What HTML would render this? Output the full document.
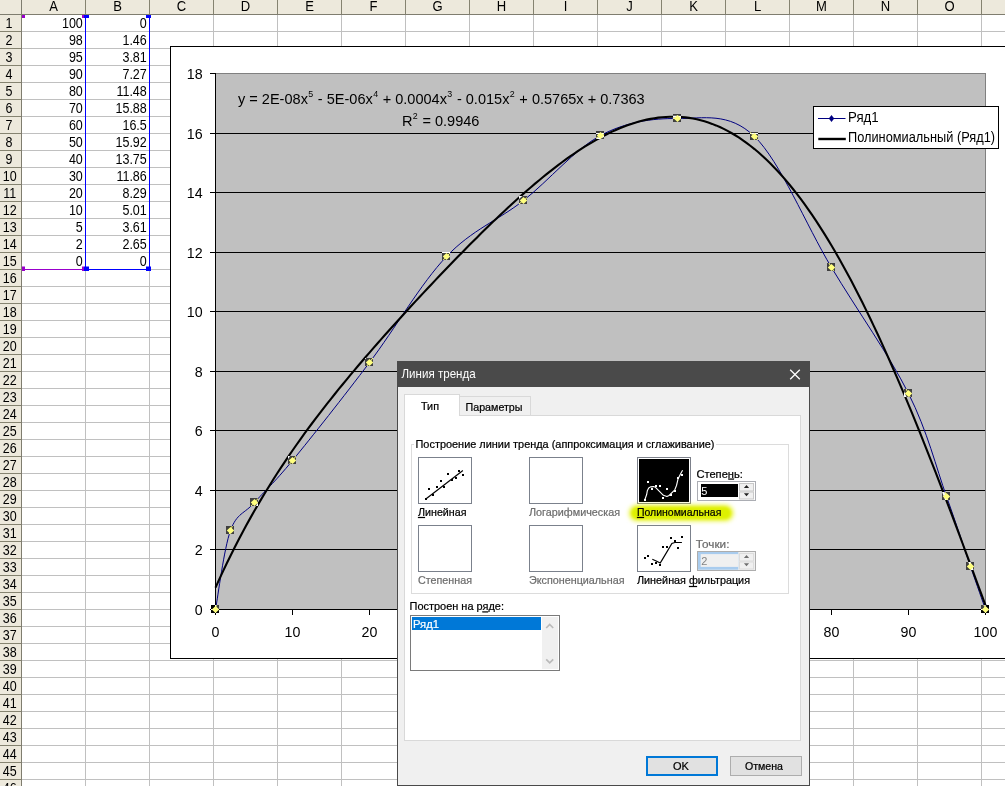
<!DOCTYPE html>
<html><head><meta charset="utf-8"><title>Линия тренда</title>
<style>html,body{margin:0;padding:0;background:#fff;overflow:hidden}body{width:1005px;height:786px;font-family:"Liberation Sans", sans-serif}svg text{white-space:pre}</style>
</head><body>
<svg width="1005" height="786" viewBox="0 0 1005 786" style="display:block"><rect x="0" y="0" width="1005" height="786" fill="#fff"/>
<rect x="0" y="0" width="1005" height="14" fill="#EDE9DC"/>
<rect x="0" y="0" width="21" height="786" fill="#EDE9DC"/>
<rect x="22" y="14" width="983" height="1" fill="#C0C0C0"/><rect x="0" y="14" width="21" height="1" fill="#858370"/><rect x="22" y="31" width="983" height="1" fill="#C0C0C0"/><rect x="0" y="31" width="21" height="1" fill="#858370"/><rect x="22" y="48" width="983" height="1" fill="#C0C0C0"/><rect x="0" y="48" width="21" height="1" fill="#858370"/><rect x="22" y="65" width="983" height="1" fill="#C0C0C0"/><rect x="0" y="65" width="21" height="1" fill="#858370"/><rect x="22" y="82" width="983" height="1" fill="#C0C0C0"/><rect x="0" y="82" width="21" height="1" fill="#858370"/><rect x="22" y="99" width="983" height="1" fill="#C0C0C0"/><rect x="0" y="99" width="21" height="1" fill="#858370"/><rect x="22" y="116" width="983" height="1" fill="#C0C0C0"/><rect x="0" y="116" width="21" height="1" fill="#858370"/><rect x="22" y="133" width="983" height="1" fill="#C0C0C0"/><rect x="0" y="133" width="21" height="1" fill="#858370"/><rect x="22" y="150" width="983" height="1" fill="#C0C0C0"/><rect x="0" y="150" width="21" height="1" fill="#858370"/><rect x="22" y="167" width="983" height="1" fill="#C0C0C0"/><rect x="0" y="167" width="21" height="1" fill="#858370"/><rect x="22" y="184" width="983" height="1" fill="#C0C0C0"/><rect x="0" y="184" width="21" height="1" fill="#858370"/><rect x="22" y="201" width="983" height="1" fill="#C0C0C0"/><rect x="0" y="201" width="21" height="1" fill="#858370"/><rect x="22" y="218" width="983" height="1" fill="#C0C0C0"/><rect x="0" y="218" width="21" height="1" fill="#858370"/><rect x="22" y="235" width="983" height="1" fill="#C0C0C0"/><rect x="0" y="235" width="21" height="1" fill="#858370"/><rect x="22" y="252" width="983" height="1" fill="#C0C0C0"/><rect x="0" y="252" width="21" height="1" fill="#858370"/><rect x="22" y="269" width="983" height="1" fill="#C0C0C0"/><rect x="0" y="269" width="21" height="1" fill="#858370"/><rect x="22" y="286" width="983" height="1" fill="#C0C0C0"/><rect x="0" y="286" width="21" height="1" fill="#858370"/><rect x="22" y="303" width="983" height="1" fill="#C0C0C0"/><rect x="0" y="303" width="21" height="1" fill="#858370"/><rect x="22" y="320" width="983" height="1" fill="#C0C0C0"/><rect x="0" y="320" width="21" height="1" fill="#858370"/><rect x="22" y="337" width="983" height="1" fill="#C0C0C0"/><rect x="0" y="337" width="21" height="1" fill="#858370"/><rect x="22" y="354" width="983" height="1" fill="#C0C0C0"/><rect x="0" y="354" width="21" height="1" fill="#858370"/><rect x="22" y="371" width="983" height="1" fill="#C0C0C0"/><rect x="0" y="371" width="21" height="1" fill="#858370"/><rect x="22" y="388" width="983" height="1" fill="#C0C0C0"/><rect x="0" y="388" width="21" height="1" fill="#858370"/><rect x="22" y="405" width="983" height="1" fill="#C0C0C0"/><rect x="0" y="405" width="21" height="1" fill="#858370"/><rect x="22" y="422" width="983" height="1" fill="#C0C0C0"/><rect x="0" y="422" width="21" height="1" fill="#858370"/><rect x="22" y="439" width="983" height="1" fill="#C0C0C0"/><rect x="0" y="439" width="21" height="1" fill="#858370"/><rect x="22" y="456" width="983" height="1" fill="#C0C0C0"/><rect x="0" y="456" width="21" height="1" fill="#858370"/><rect x="22" y="473" width="983" height="1" fill="#C0C0C0"/><rect x="0" y="473" width="21" height="1" fill="#858370"/><rect x="22" y="490" width="983" height="1" fill="#C0C0C0"/><rect x="0" y="490" width="21" height="1" fill="#858370"/><rect x="22" y="507" width="983" height="1" fill="#C0C0C0"/><rect x="0" y="507" width="21" height="1" fill="#858370"/><rect x="22" y="524" width="983" height="1" fill="#C0C0C0"/><rect x="0" y="524" width="21" height="1" fill="#858370"/><rect x="22" y="541" width="983" height="1" fill="#C0C0C0"/><rect x="0" y="541" width="21" height="1" fill="#858370"/><rect x="22" y="558" width="983" height="1" fill="#C0C0C0"/><rect x="0" y="558" width="21" height="1" fill="#858370"/><rect x="22" y="575" width="983" height="1" fill="#C0C0C0"/><rect x="0" y="575" width="21" height="1" fill="#858370"/><rect x="22" y="592" width="983" height="1" fill="#C0C0C0"/><rect x="0" y="592" width="21" height="1" fill="#858370"/><rect x="22" y="609" width="983" height="1" fill="#C0C0C0"/><rect x="0" y="609" width="21" height="1" fill="#858370"/><rect x="22" y="626" width="983" height="1" fill="#C0C0C0"/><rect x="0" y="626" width="21" height="1" fill="#858370"/><rect x="22" y="643" width="983" height="1" fill="#C0C0C0"/><rect x="0" y="643" width="21" height="1" fill="#858370"/><rect x="22" y="660" width="983" height="1" fill="#C0C0C0"/><rect x="0" y="660" width="21" height="1" fill="#858370"/><rect x="22" y="677" width="983" height="1" fill="#C0C0C0"/><rect x="0" y="677" width="21" height="1" fill="#858370"/><rect x="22" y="694" width="983" height="1" fill="#C0C0C0"/><rect x="0" y="694" width="21" height="1" fill="#858370"/><rect x="22" y="711" width="983" height="1" fill="#C0C0C0"/><rect x="0" y="711" width="21" height="1" fill="#858370"/><rect x="22" y="728" width="983" height="1" fill="#C0C0C0"/><rect x="0" y="728" width="21" height="1" fill="#858370"/><rect x="22" y="745" width="983" height="1" fill="#C0C0C0"/><rect x="0" y="745" width="21" height="1" fill="#858370"/><rect x="22" y="762" width="983" height="1" fill="#C0C0C0"/><rect x="0" y="762" width="21" height="1" fill="#858370"/><rect x="22" y="779" width="983" height="1" fill="#C0C0C0"/><rect x="0" y="779" width="21" height="1" fill="#858370"/><rect x="21" y="15" width="1" height="771" fill="#C0C0C0"/><rect x="21" y="0" width="1" height="14" fill="#858370"/><rect x="85" y="15" width="1" height="771" fill="#C0C0C0"/><rect x="85" y="0" width="1" height="14" fill="#858370"/><rect x="149" y="15" width="1" height="771" fill="#C0C0C0"/><rect x="149" y="0" width="1" height="14" fill="#858370"/><rect x="213" y="15" width="1" height="771" fill="#C0C0C0"/><rect x="213" y="0" width="1" height="14" fill="#858370"/><rect x="277" y="15" width="1" height="771" fill="#C0C0C0"/><rect x="277" y="0" width="1" height="14" fill="#858370"/><rect x="341" y="15" width="1" height="771" fill="#C0C0C0"/><rect x="341" y="0" width="1" height="14" fill="#858370"/><rect x="405" y="15" width="1" height="771" fill="#C0C0C0"/><rect x="405" y="0" width="1" height="14" fill="#858370"/><rect x="469" y="15" width="1" height="771" fill="#C0C0C0"/><rect x="469" y="0" width="1" height="14" fill="#858370"/><rect x="533" y="15" width="1" height="771" fill="#C0C0C0"/><rect x="533" y="0" width="1" height="14" fill="#858370"/><rect x="597" y="15" width="1" height="771" fill="#C0C0C0"/><rect x="597" y="0" width="1" height="14" fill="#858370"/><rect x="661" y="15" width="1" height="771" fill="#C0C0C0"/><rect x="661" y="0" width="1" height="14" fill="#858370"/><rect x="725" y="15" width="1" height="771" fill="#C0C0C0"/><rect x="725" y="0" width="1" height="14" fill="#858370"/><rect x="789" y="15" width="1" height="771" fill="#C0C0C0"/><rect x="789" y="0" width="1" height="14" fill="#858370"/><rect x="853" y="15" width="1" height="771" fill="#C0C0C0"/><rect x="853" y="0" width="1" height="14" fill="#858370"/><rect x="917" y="15" width="1" height="771" fill="#C0C0C0"/><rect x="917" y="0" width="1" height="14" fill="#858370"/><rect x="981" y="15" width="1" height="771" fill="#C0C0C0"/><rect x="981" y="0" width="1" height="14" fill="#858370"/>
<rect x="0" y="14" width="1005" height="1" fill="#7F7D6F"/>
<rect x="21" y="0" width="1" height="786" fill="#7F7D6F"/>
<text transform="translate(53.5,11.2) scale(0.9,1)" font-family='"Liberation Sans", sans-serif' font-size="14.5" fill="#000" text-anchor="middle" >A</text>
<text transform="translate(117.5,11.2) scale(0.9,1)" font-family='"Liberation Sans", sans-serif' font-size="14.5" fill="#000" text-anchor="middle" >B</text>
<text transform="translate(181.5,11.2) scale(0.9,1)" font-family='"Liberation Sans", sans-serif' font-size="14.5" fill="#000" text-anchor="middle" >C</text>
<text transform="translate(245.5,11.2) scale(0.9,1)" font-family='"Liberation Sans", sans-serif' font-size="14.5" fill="#000" text-anchor="middle" >D</text>
<text transform="translate(309.5,11.2) scale(0.9,1)" font-family='"Liberation Sans", sans-serif' font-size="14.5" fill="#000" text-anchor="middle" >E</text>
<text transform="translate(373.5,11.2) scale(0.9,1)" font-family='"Liberation Sans", sans-serif' font-size="14.5" fill="#000" text-anchor="middle" >F</text>
<text transform="translate(437.5,11.2) scale(0.9,1)" font-family='"Liberation Sans", sans-serif' font-size="14.5" fill="#000" text-anchor="middle" >G</text>
<text transform="translate(501.5,11.2) scale(0.9,1)" font-family='"Liberation Sans", sans-serif' font-size="14.5" fill="#000" text-anchor="middle" >H</text>
<text transform="translate(565.5,11.2) scale(0.9,1)" font-family='"Liberation Sans", sans-serif' font-size="14.5" fill="#000" text-anchor="middle" >I</text>
<text transform="translate(629.5,11.2) scale(0.9,1)" font-family='"Liberation Sans", sans-serif' font-size="14.5" fill="#000" text-anchor="middle" >J</text>
<text transform="translate(693.5,11.2) scale(0.9,1)" font-family='"Liberation Sans", sans-serif' font-size="14.5" fill="#000" text-anchor="middle" >K</text>
<text transform="translate(757.5,11.2) scale(0.9,1)" font-family='"Liberation Sans", sans-serif' font-size="14.5" fill="#000" text-anchor="middle" >L</text>
<text transform="translate(821.5,11.2) scale(0.9,1)" font-family='"Liberation Sans", sans-serif' font-size="14.5" fill="#000" text-anchor="middle" >M</text>
<text transform="translate(885.5,11.2) scale(0.9,1)" font-family='"Liberation Sans", sans-serif' font-size="14.5" fill="#000" text-anchor="middle" >N</text>
<text transform="translate(949.5,11.2) scale(0.9,1)" font-family='"Liberation Sans", sans-serif' font-size="14.5" fill="#000" text-anchor="middle" >O</text>
<text transform="translate(8.9,28) scale(0.87,1)" font-family='"Liberation Sans", sans-serif' font-size="14.4" fill="#000" text-anchor="middle" >1</text>
<text transform="translate(8.9,45) scale(0.87,1)" font-family='"Liberation Sans", sans-serif' font-size="14.4" fill="#000" text-anchor="middle" >2</text>
<text transform="translate(8.9,62) scale(0.87,1)" font-family='"Liberation Sans", sans-serif' font-size="14.4" fill="#000" text-anchor="middle" >3</text>
<text transform="translate(8.9,79) scale(0.87,1)" font-family='"Liberation Sans", sans-serif' font-size="14.4" fill="#000" text-anchor="middle" >4</text>
<text transform="translate(8.9,96) scale(0.87,1)" font-family='"Liberation Sans", sans-serif' font-size="14.4" fill="#000" text-anchor="middle" >5</text>
<text transform="translate(8.9,113) scale(0.87,1)" font-family='"Liberation Sans", sans-serif' font-size="14.4" fill="#000" text-anchor="middle" >6</text>
<text transform="translate(8.9,130) scale(0.87,1)" font-family='"Liberation Sans", sans-serif' font-size="14.4" fill="#000" text-anchor="middle" >7</text>
<text transform="translate(8.9,147) scale(0.87,1)" font-family='"Liberation Sans", sans-serif' font-size="14.4" fill="#000" text-anchor="middle" >8</text>
<text transform="translate(8.9,164) scale(0.87,1)" font-family='"Liberation Sans", sans-serif' font-size="14.4" fill="#000" text-anchor="middle" >9</text>
<text transform="translate(9.8,181) scale(0.87,1)" font-family='"Liberation Sans", sans-serif' font-size="14.4" fill="#000" text-anchor="middle" >10</text>
<text transform="translate(9.8,198) scale(0.87,1)" font-family='"Liberation Sans", sans-serif' font-size="14.4" fill="#000" text-anchor="middle" >11</text>
<text transform="translate(9.8,215) scale(0.87,1)" font-family='"Liberation Sans", sans-serif' font-size="14.4" fill="#000" text-anchor="middle" >12</text>
<text transform="translate(9.8,232) scale(0.87,1)" font-family='"Liberation Sans", sans-serif' font-size="14.4" fill="#000" text-anchor="middle" >13</text>
<text transform="translate(9.8,249) scale(0.87,1)" font-family='"Liberation Sans", sans-serif' font-size="14.4" fill="#000" text-anchor="middle" >14</text>
<text transform="translate(9.8,266) scale(0.87,1)" font-family='"Liberation Sans", sans-serif' font-size="14.4" fill="#000" text-anchor="middle" >15</text>
<text transform="translate(9.8,283) scale(0.87,1)" font-family='"Liberation Sans", sans-serif' font-size="14.4" fill="#000" text-anchor="middle" >16</text>
<text transform="translate(9.8,300) scale(0.87,1)" font-family='"Liberation Sans", sans-serif' font-size="14.4" fill="#000" text-anchor="middle" >17</text>
<text transform="translate(9.8,317) scale(0.87,1)" font-family='"Liberation Sans", sans-serif' font-size="14.4" fill="#000" text-anchor="middle" >18</text>
<text transform="translate(9.8,334) scale(0.87,1)" font-family='"Liberation Sans", sans-serif' font-size="14.4" fill="#000" text-anchor="middle" >19</text>
<text transform="translate(9.8,351) scale(0.87,1)" font-family='"Liberation Sans", sans-serif' font-size="14.4" fill="#000" text-anchor="middle" >20</text>
<text transform="translate(9.8,368) scale(0.87,1)" font-family='"Liberation Sans", sans-serif' font-size="14.4" fill="#000" text-anchor="middle" >21</text>
<text transform="translate(9.8,385) scale(0.87,1)" font-family='"Liberation Sans", sans-serif' font-size="14.4" fill="#000" text-anchor="middle" >22</text>
<text transform="translate(9.8,402) scale(0.87,1)" font-family='"Liberation Sans", sans-serif' font-size="14.4" fill="#000" text-anchor="middle" >23</text>
<text transform="translate(9.8,419) scale(0.87,1)" font-family='"Liberation Sans", sans-serif' font-size="14.4" fill="#000" text-anchor="middle" >24</text>
<text transform="translate(9.8,436) scale(0.87,1)" font-family='"Liberation Sans", sans-serif' font-size="14.4" fill="#000" text-anchor="middle" >25</text>
<text transform="translate(9.8,453) scale(0.87,1)" font-family='"Liberation Sans", sans-serif' font-size="14.4" fill="#000" text-anchor="middle" >26</text>
<text transform="translate(9.8,470) scale(0.87,1)" font-family='"Liberation Sans", sans-serif' font-size="14.4" fill="#000" text-anchor="middle" >27</text>
<text transform="translate(9.8,487) scale(0.87,1)" font-family='"Liberation Sans", sans-serif' font-size="14.4" fill="#000" text-anchor="middle" >28</text>
<text transform="translate(9.8,504) scale(0.87,1)" font-family='"Liberation Sans", sans-serif' font-size="14.4" fill="#000" text-anchor="middle" >29</text>
<text transform="translate(9.8,521) scale(0.87,1)" font-family='"Liberation Sans", sans-serif' font-size="14.4" fill="#000" text-anchor="middle" >30</text>
<text transform="translate(9.8,538) scale(0.87,1)" font-family='"Liberation Sans", sans-serif' font-size="14.4" fill="#000" text-anchor="middle" >31</text>
<text transform="translate(9.8,555) scale(0.87,1)" font-family='"Liberation Sans", sans-serif' font-size="14.4" fill="#000" text-anchor="middle" >32</text>
<text transform="translate(9.8,572) scale(0.87,1)" font-family='"Liberation Sans", sans-serif' font-size="14.4" fill="#000" text-anchor="middle" >33</text>
<text transform="translate(9.8,589) scale(0.87,1)" font-family='"Liberation Sans", sans-serif' font-size="14.4" fill="#000" text-anchor="middle" >34</text>
<text transform="translate(9.8,606) scale(0.87,1)" font-family='"Liberation Sans", sans-serif' font-size="14.4" fill="#000" text-anchor="middle" >35</text>
<text transform="translate(9.8,623) scale(0.87,1)" font-family='"Liberation Sans", sans-serif' font-size="14.4" fill="#000" text-anchor="middle" >36</text>
<text transform="translate(9.8,640) scale(0.87,1)" font-family='"Liberation Sans", sans-serif' font-size="14.4" fill="#000" text-anchor="middle" >37</text>
<text transform="translate(9.8,657) scale(0.87,1)" font-family='"Liberation Sans", sans-serif' font-size="14.4" fill="#000" text-anchor="middle" >38</text>
<text transform="translate(9.8,674) scale(0.87,1)" font-family='"Liberation Sans", sans-serif' font-size="14.4" fill="#000" text-anchor="middle" >39</text>
<text transform="translate(9.8,691) scale(0.87,1)" font-family='"Liberation Sans", sans-serif' font-size="14.4" fill="#000" text-anchor="middle" >40</text>
<text transform="translate(9.8,708) scale(0.87,1)" font-family='"Liberation Sans", sans-serif' font-size="14.4" fill="#000" text-anchor="middle" >41</text>
<text transform="translate(9.8,725) scale(0.87,1)" font-family='"Liberation Sans", sans-serif' font-size="14.4" fill="#000" text-anchor="middle" >42</text>
<text transform="translate(9.8,742) scale(0.87,1)" font-family='"Liberation Sans", sans-serif' font-size="14.4" fill="#000" text-anchor="middle" >43</text>
<text transform="translate(9.8,759) scale(0.87,1)" font-family='"Liberation Sans", sans-serif' font-size="14.4" fill="#000" text-anchor="middle" >44</text>
<text transform="translate(9.8,776) scale(0.87,1)" font-family='"Liberation Sans", sans-serif' font-size="14.4" fill="#000" text-anchor="middle" >45</text>
<text transform="translate(9.8,793) scale(0.87,1)" font-family='"Liberation Sans", sans-serif' font-size="14.4" fill="#000" text-anchor="middle" >46</text>
<text transform="translate(82.8,28) scale(0.87,1)" font-family='"Liberation Sans", sans-serif' font-size="14.4" fill="#000" text-anchor="end" >100</text>
<text transform="translate(146.8,28) scale(0.87,1)" font-family='"Liberation Sans", sans-serif' font-size="14.4" fill="#000" text-anchor="end" >0</text>
<text transform="translate(82.8,45) scale(0.87,1)" font-family='"Liberation Sans", sans-serif' font-size="14.4" fill="#000" text-anchor="end" >98</text>
<text transform="translate(146.8,45) scale(0.87,1)" font-family='"Liberation Sans", sans-serif' font-size="14.4" fill="#000" text-anchor="end" >1.46</text>
<text transform="translate(82.8,62) scale(0.87,1)" font-family='"Liberation Sans", sans-serif' font-size="14.4" fill="#000" text-anchor="end" >95</text>
<text transform="translate(146.8,62) scale(0.87,1)" font-family='"Liberation Sans", sans-serif' font-size="14.4" fill="#000" text-anchor="end" >3.81</text>
<text transform="translate(82.8,79) scale(0.87,1)" font-family='"Liberation Sans", sans-serif' font-size="14.4" fill="#000" text-anchor="end" >90</text>
<text transform="translate(146.8,79) scale(0.87,1)" font-family='"Liberation Sans", sans-serif' font-size="14.4" fill="#000" text-anchor="end" >7.27</text>
<text transform="translate(82.8,96) scale(0.87,1)" font-family='"Liberation Sans", sans-serif' font-size="14.4" fill="#000" text-anchor="end" >80</text>
<text transform="translate(146.8,96) scale(0.87,1)" font-family='"Liberation Sans", sans-serif' font-size="14.4" fill="#000" text-anchor="end" >11.48</text>
<text transform="translate(82.8,113) scale(0.87,1)" font-family='"Liberation Sans", sans-serif' font-size="14.4" fill="#000" text-anchor="end" >70</text>
<text transform="translate(146.8,113) scale(0.87,1)" font-family='"Liberation Sans", sans-serif' font-size="14.4" fill="#000" text-anchor="end" >15.88</text>
<text transform="translate(82.8,130) scale(0.87,1)" font-family='"Liberation Sans", sans-serif' font-size="14.4" fill="#000" text-anchor="end" >60</text>
<text transform="translate(146.8,130) scale(0.87,1)" font-family='"Liberation Sans", sans-serif' font-size="14.4" fill="#000" text-anchor="end" >16.5</text>
<text transform="translate(82.8,147) scale(0.87,1)" font-family='"Liberation Sans", sans-serif' font-size="14.4" fill="#000" text-anchor="end" >50</text>
<text transform="translate(146.8,147) scale(0.87,1)" font-family='"Liberation Sans", sans-serif' font-size="14.4" fill="#000" text-anchor="end" >15.92</text>
<text transform="translate(82.8,164) scale(0.87,1)" font-family='"Liberation Sans", sans-serif' font-size="14.4" fill="#000" text-anchor="end" >40</text>
<text transform="translate(146.8,164) scale(0.87,1)" font-family='"Liberation Sans", sans-serif' font-size="14.4" fill="#000" text-anchor="end" >13.75</text>
<text transform="translate(82.8,181) scale(0.87,1)" font-family='"Liberation Sans", sans-serif' font-size="14.4" fill="#000" text-anchor="end" >30</text>
<text transform="translate(146.8,181) scale(0.87,1)" font-family='"Liberation Sans", sans-serif' font-size="14.4" fill="#000" text-anchor="end" >11.86</text>
<text transform="translate(82.8,198) scale(0.87,1)" font-family='"Liberation Sans", sans-serif' font-size="14.4" fill="#000" text-anchor="end" >20</text>
<text transform="translate(146.8,198) scale(0.87,1)" font-family='"Liberation Sans", sans-serif' font-size="14.4" fill="#000" text-anchor="end" >8.29</text>
<text transform="translate(82.8,215) scale(0.87,1)" font-family='"Liberation Sans", sans-serif' font-size="14.4" fill="#000" text-anchor="end" >10</text>
<text transform="translate(146.8,215) scale(0.87,1)" font-family='"Liberation Sans", sans-serif' font-size="14.4" fill="#000" text-anchor="end" >5.01</text>
<text transform="translate(82.8,232) scale(0.87,1)" font-family='"Liberation Sans", sans-serif' font-size="14.4" fill="#000" text-anchor="end" >5</text>
<text transform="translate(146.8,232) scale(0.87,1)" font-family='"Liberation Sans", sans-serif' font-size="14.4" fill="#000" text-anchor="end" >3.61</text>
<text transform="translate(82.8,249) scale(0.87,1)" font-family='"Liberation Sans", sans-serif' font-size="14.4" fill="#000" text-anchor="end" >2</text>
<text transform="translate(146.8,249) scale(0.87,1)" font-family='"Liberation Sans", sans-serif' font-size="14.4" fill="#000" text-anchor="end" >2.65</text>
<text transform="translate(82.8,266) scale(0.87,1)" font-family='"Liberation Sans", sans-serif' font-size="14.4" fill="#000" text-anchor="end" >0</text>
<text transform="translate(146.8,266) scale(0.87,1)" font-family='"Liberation Sans", sans-serif' font-size="14.4" fill="#000" text-anchor="end" >0</text>
<rect x="85" y="15" width="1" height="255" fill="#0000FF"/>
<rect x="149" y="15" width="1" height="255" fill="#0000FF"/>
<rect x="85" y="269" width="65" height="1" fill="#0000FF"/>
<rect x="22" y="269" width="63" height="1" fill="#9900CC"/>
<rect x="22" y="15" width="3" height="3" fill="#9900CC"/>
<rect x="82" y="15" width="2" height="3" fill="#9900CC"/>
<rect x="84" y="15" width="5" height="3" fill="#0000FF"/>
<rect x="146" y="15" width="5" height="3" fill="#0000FF"/>
<rect x="22" y="266.5" width="3" height="4.5" fill="#9900CC"/>
<rect x="82" y="266.5" width="2" height="4.5" fill="#9900CC"/>
<rect x="84" y="266.5" width="5" height="4.5" fill="#0000FF"/>
<rect x="146" y="266.5" width="5" height="4.5" fill="#0000FF"/>
<rect x="170.5" y="46.5" width="900" height="612" fill="#fff" stroke="#000" stroke-width="1"/>
<rect x="215.5" y="73.5" width="770" height="536" fill="#C0C0C0" stroke="#808080" stroke-width="1"/>
<rect x="215" y="549" width="770" height="1" fill="#000"/>
<rect x="215" y="490" width="770" height="1" fill="#000"/>
<rect x="215" y="430" width="770" height="1" fill="#000"/>
<rect x="215" y="371" width="770" height="1" fill="#000"/>
<rect x="215" y="311" width="770" height="1" fill="#000"/>
<rect x="215" y="252" width="770" height="1" fill="#000"/>
<rect x="215" y="192" width="770" height="1" fill="#000"/>
<rect x="215" y="133" width="770" height="1" fill="#000"/>
<rect x="215" y="73" width="1" height="537" fill="#000"/>
<rect x="215" y="609" width="771" height="1" fill="#000"/>
<rect x="210" y="609" width="5" height="1" fill="#000"/>
<rect x="210" y="549" width="5" height="1" fill="#000"/>
<rect x="210" y="490" width="5" height="1" fill="#000"/>
<rect x="210" y="430" width="5" height="1" fill="#000"/>
<rect x="210" y="371" width="5" height="1" fill="#000"/>
<rect x="210" y="311" width="5" height="1" fill="#000"/>
<rect x="210" y="252" width="5" height="1" fill="#000"/>
<rect x="210" y="192" width="5" height="1" fill="#000"/>
<rect x="210" y="133" width="5" height="1" fill="#000"/>
<rect x="210" y="73" width="5" height="1" fill="#000"/>
<rect x="215" y="609" width="1" height="6" fill="#000"/>
<rect x="292" y="609" width="1" height="6" fill="#000"/>
<rect x="369" y="609" width="1" height="6" fill="#000"/>
<rect x="446" y="609" width="1" height="6" fill="#000"/>
<rect x="523" y="609" width="1" height="6" fill="#000"/>
<rect x="600" y="609" width="1" height="6" fill="#000"/>
<rect x="677" y="609" width="1" height="6" fill="#000"/>
<rect x="754" y="609" width="1" height="6" fill="#000"/>
<rect x="831" y="609" width="1" height="6" fill="#000"/>
<rect x="908" y="609" width="1" height="6" fill="#000"/>
<rect x="985" y="609" width="1" height="6" fill="#000"/>
<text transform="translate(202.6,615.0) scale(0.925,1)" font-family='"Liberation Sans", sans-serif' font-size="15.4" fill="#000" text-anchor="end" >0</text>
<text transform="translate(202.6,555.0) scale(0.925,1)" font-family='"Liberation Sans", sans-serif' font-size="15.4" fill="#000" text-anchor="end" >2</text>
<text transform="translate(202.6,496.0) scale(0.925,1)" font-family='"Liberation Sans", sans-serif' font-size="15.4" fill="#000" text-anchor="end" >4</text>
<text transform="translate(202.6,436.0) scale(0.925,1)" font-family='"Liberation Sans", sans-serif' font-size="15.4" fill="#000" text-anchor="end" >6</text>
<text transform="translate(202.6,377.0) scale(0.925,1)" font-family='"Liberation Sans", sans-serif' font-size="15.4" fill="#000" text-anchor="end" >8</text>
<text transform="translate(202.6,317.0) scale(0.925,1)" font-family='"Liberation Sans", sans-serif' font-size="15.4" fill="#000" text-anchor="end" >10</text>
<text transform="translate(202.6,258.0) scale(0.925,1)" font-family='"Liberation Sans", sans-serif' font-size="15.4" fill="#000" text-anchor="end" >12</text>
<text transform="translate(202.6,198.0) scale(0.925,1)" font-family='"Liberation Sans", sans-serif' font-size="15.4" fill="#000" text-anchor="end" >14</text>
<text transform="translate(202.6,139.0) scale(0.925,1)" font-family='"Liberation Sans", sans-serif' font-size="15.4" fill="#000" text-anchor="end" >16</text>
<text transform="translate(202.6,79.0) scale(0.925,1)" font-family='"Liberation Sans", sans-serif' font-size="15.4" fill="#000" text-anchor="end" >18</text>
<text transform="translate(215.5,637.2) scale(0.925,1)" font-family='"Liberation Sans", sans-serif' font-size="15.4" fill="#000" text-anchor="middle" >0</text>
<text transform="translate(292.5,637.2) scale(0.925,1)" font-family='"Liberation Sans", sans-serif' font-size="15.4" fill="#000" text-anchor="middle" >10</text>
<text transform="translate(369.5,637.2) scale(0.925,1)" font-family='"Liberation Sans", sans-serif' font-size="15.4" fill="#000" text-anchor="middle" >20</text>
<text transform="translate(446.5,637.2) scale(0.925,1)" font-family='"Liberation Sans", sans-serif' font-size="15.4" fill="#000" text-anchor="middle" >30</text>
<text transform="translate(523.5,637.2) scale(0.925,1)" font-family='"Liberation Sans", sans-serif' font-size="15.4" fill="#000" text-anchor="middle" >40</text>
<text transform="translate(600.5,637.2) scale(0.925,1)" font-family='"Liberation Sans", sans-serif' font-size="15.4" fill="#000" text-anchor="middle" >50</text>
<text transform="translate(677.5,637.2) scale(0.925,1)" font-family='"Liberation Sans", sans-serif' font-size="15.4" fill="#000" text-anchor="middle" >60</text>
<text transform="translate(754.5,637.2) scale(0.925,1)" font-family='"Liberation Sans", sans-serif' font-size="15.4" fill="#000" text-anchor="middle" >70</text>
<text transform="translate(831.5,637.2) scale(0.925,1)" font-family='"Liberation Sans", sans-serif' font-size="15.4" fill="#000" text-anchor="middle" >80</text>
<text transform="translate(908.5,637.2) scale(0.925,1)" font-family='"Liberation Sans", sans-serif' font-size="15.4" fill="#000" text-anchor="middle" >90</text>
<text transform="translate(985.5,637.2) scale(0.925,1)" font-family='"Liberation Sans", sans-serif' font-size="15.4" fill="#000" text-anchor="middle" >100</text>
<path d="M985.50,609.50 C983.00,602.33 977.00,585.33 970.50,566.50 C964.00,547.67 956.83,525.33 946.50,496.50 C936.17,467.67 927.67,431.67 908.50,393.50 C889.33,355.33 857.17,310.33 831.50,267.50 C805.83,224.67 780.17,161.33 754.50,136.50 C728.83,111.67 703.17,118.67 677.50,118.50 C651.83,118.33 626.17,121.83 600.50,135.50 C574.83,149.17 549.17,180.33 523.50,200.50 C497.83,220.67 472.17,229.50 446.50,256.50 C420.83,283.50 395.17,328.50 369.50,362.50 C343.83,396.50 311.67,437.17 292.50,460.50 C273.33,483.83 264.83,490.83 254.50,502.50 C244.17,514.17 237.00,512.67 230.50,530.50 C224.00,548.33 218.00,596.33 215.50,609.50" fill="none" stroke="#000080" stroke-width="1"/>
<path d="M215.50,587.58 L219.35,579.10 L223.20,570.84 L227.05,562.79 L230.90,554.94 L234.75,547.27 L238.60,539.79 L242.45,532.49 L246.30,525.35 L250.15,518.38 L254.00,511.56 L257.85,504.88 L261.70,498.35 L265.55,491.96 L269.40,485.69 L273.25,479.55 L277.10,473.52 L280.95,467.61 L284.80,461.80 L288.65,456.10 L292.50,450.49 L296.35,444.98 L300.20,439.55 L304.05,434.21 L307.90,428.94 L311.75,423.75 L315.60,418.63 L319.45,413.58 L323.30,408.59 L327.15,403.66 L331.00,398.79 L334.85,393.98 L338.70,389.21 L342.55,384.49 L346.40,379.82 L350.25,375.18 L354.10,370.59 L357.95,366.04 L361.80,361.52 L365.65,357.04 L369.50,352.59 L373.35,348.17 L377.20,343.77 L381.05,339.41 L384.90,335.07 L388.75,330.75 L392.60,326.46 L396.45,322.19 L400.30,317.94 L404.15,313.72 L408.00,309.51 L411.85,305.32 L415.70,301.16 L419.55,297.01 L423.40,292.88 L427.25,288.77 L431.10,284.68 L434.95,280.60 L438.80,276.55 L442.65,272.51 L446.50,268.50 L450.35,264.50 L454.20,260.53 L458.05,256.58 L461.90,252.65 L465.75,248.74 L469.60,244.85 L473.45,240.99 L477.30,237.16 L481.15,233.35 L485.00,229.57 L488.85,225.82 L492.70,222.11 L496.55,218.42 L500.40,214.77 L504.25,211.15 L508.10,207.57 L511.95,204.02 L515.80,200.52 L519.65,197.06 L523.50,193.64 L527.35,190.27 L531.20,186.94 L535.05,183.66 L538.90,180.44 L542.75,177.26 L546.60,174.14 L550.45,171.08 L554.30,168.08 L558.15,165.14 L562.00,162.26 L565.85,159.45 L569.70,156.71 L573.55,154.04 L577.40,151.43 L581.25,148.91 L585.10,146.46 L588.95,144.09 L592.80,141.80 L596.65,139.60 L600.50,137.48 L604.35,135.45 L608.20,133.51 L612.05,131.66 L615.90,129.92 L619.75,128.26 L623.60,126.71 L627.45,125.26 L631.30,123.92 L635.15,122.68 L639.00,121.56 L642.85,120.54 L646.70,119.64 L650.55,118.86 L654.40,118.19 L658.25,117.65 L662.10,117.23 L665.95,116.93 L669.80,116.77 L673.65,116.73 L677.50,116.82 L681.35,117.05 L685.20,117.41 L689.05,117.91 L692.90,118.54 L696.75,119.32 L700.60,120.25 L704.45,121.31 L708.30,122.53 L712.15,123.89 L716.00,125.40 L719.85,127.07 L723.70,128.88 L727.55,130.85 L731.40,132.98 L735.25,135.26 L739.10,137.70 L742.95,140.30 L746.80,143.07 L750.65,145.99 L754.50,149.07 L758.35,152.32 L762.20,155.73 L766.05,159.31 L769.90,163.05 L773.75,166.96 L777.60,171.03 L781.45,175.27 L785.30,179.68 L789.15,184.25 L793.00,188.99 L796.85,193.90 L800.70,198.98 L804.55,204.22 L808.40,209.63 L812.25,215.20 L816.10,220.94 L819.95,226.84 L823.80,232.91 L827.65,239.14 L831.50,245.53 L835.35,252.08 L839.20,258.80 L843.05,265.67 L846.90,272.69 L850.75,279.87 L854.60,287.21 L858.45,294.70 L862.30,302.33 L866.15,310.11 L870.00,318.04 L873.85,326.11 L877.70,334.32 L881.55,342.66 L885.40,351.14 L889.25,359.75 L893.10,368.49 L896.95,377.35 L900.80,386.34 L904.65,395.44 L908.50,404.65 L912.35,413.97 L916.20,423.40 L920.05,432.93 L923.90,442.55 L927.75,452.27 L931.60,462.08 L935.45,471.96 L939.30,481.92 L943.15,491.96 L947.00,502.06 L950.85,512.22 L954.70,522.43 L958.55,532.69 L962.40,543.00 L966.25,553.33 L970.10,563.70 L973.95,574.09 L977.80,584.49 L981.65,594.91 L985.50,605.32" fill="none" stroke="#000" stroke-width="2.1" stroke-linejoin="round"/>
<path d="M985.5,605.9 l3.7,3.6 l-3.7,3.6 l-3.7,-3.6 z" fill="#000080"/>
<path d="M970.5,562.9 l3.7,3.6 l-3.7,3.6 l-3.7,-3.6 z" fill="#000080"/>
<path d="M946.5,492.9 l3.7,3.6 l-3.7,3.6 l-3.7,-3.6 z" fill="#000080"/>
<path d="M908.5,389.9 l3.7,3.6 l-3.7,3.6 l-3.7,-3.6 z" fill="#000080"/>
<path d="M831.5,263.9 l3.7,3.6 l-3.7,3.6 l-3.7,-3.6 z" fill="#000080"/>
<path d="M754.5,132.9 l3.7,3.6 l-3.7,3.6 l-3.7,-3.6 z" fill="#000080"/>
<path d="M677.5,114.9 l3.7,3.6 l-3.7,3.6 l-3.7,-3.6 z" fill="#000080"/>
<path d="M600.5,131.9 l3.7,3.6 l-3.7,3.6 l-3.7,-3.6 z" fill="#000080"/>
<path d="M523.5,196.9 l3.7,3.6 l-3.7,3.6 l-3.7,-3.6 z" fill="#000080"/>
<path d="M446.5,252.9 l3.7,3.6 l-3.7,3.6 l-3.7,-3.6 z" fill="#000080"/>
<path d="M369.5,358.9 l3.7,3.6 l-3.7,3.6 l-3.7,-3.6 z" fill="#000080"/>
<path d="M292.5,456.9 l3.7,3.6 l-3.7,3.6 l-3.7,-3.6 z" fill="#000080"/>
<path d="M254.5,498.9 l3.7,3.6 l-3.7,3.6 l-3.7,-3.6 z" fill="#000080"/>
<path d="M230.5,526.9 l3.7,3.6 l-3.7,3.6 l-3.7,-3.6 z" fill="#000080"/>
<path d="M215.5,605.9 l3.7,3.6 l-3.7,3.6 l-3.7,-3.6 z" fill="#000080"/>
<g style="mix-blend-mode:difference" shape-rendering="crispEdges">
<rect x="981.0" y="605.0" width="8" height="8" fill="#fff"/>
<rect x="966.0" y="562.0" width="8" height="8" fill="#fff"/>
<rect x="942.0" y="492.0" width="8" height="8" fill="#fff"/>
<rect x="904.0" y="389.0" width="8" height="8" fill="#fff"/>
<rect x="827.0" y="263.0" width="8" height="8" fill="#fff"/>
<rect x="750.0" y="132.0" width="8" height="8" fill="#fff"/>
<rect x="673.0" y="114.0" width="8" height="8" fill="#fff"/>
<rect x="596.0" y="131.0" width="8" height="8" fill="#fff"/>
<rect x="519.0" y="196.0" width="8" height="8" fill="#fff"/>
<rect x="442.0" y="252.0" width="8" height="8" fill="#fff"/>
<rect x="365.0" y="358.0" width="8" height="8" fill="#fff"/>
<rect x="288.0" y="456.0" width="8" height="8" fill="#fff"/>
<rect x="250.0" y="498.0" width="8" height="8" fill="#fff"/>
<rect x="226.0" y="526.0" width="8" height="8" fill="#fff"/>
<rect x="211.0" y="605.0" width="8" height="8" fill="#fff"/>
</g>
<text transform="translate(238,104) scale(0.945,1)" font-family='"Liberation Sans", sans-serif' font-size="15.4" fill="#000" text-anchor="start" >y = 2E-08x<tspan dy="-7" font-size="9.4" dx="0.4">5</tspan><tspan dy="7" dx="0.6"> - 5E-06x</tspan><tspan dy="-7" font-size="9.4" dx="0.4">4</tspan><tspan dy="7" dx="0.6"> + 0.0004x</tspan><tspan dy="-7" font-size="9.4" dx="0.4">3</tspan><tspan dy="7" dx="0.6"> - 0.015x</tspan><tspan dy="-7" font-size="9.4" dx="0.4">2</tspan><tspan dy="7" dx="0.6"> + 0.5765x + 0.7363</tspan></text>
<text transform="translate(402,126) scale(0.945,1)" font-family='"Liberation Sans", sans-serif' font-size="15.4" fill="#000" text-anchor="start" >R<tspan dy="-7" font-size="9.4" dx="0.4">2</tspan><tspan dy="7" dx="0.6"> = 0.9946</tspan></text>
<rect x="813.5" y="106.5" width="185" height="42" fill="#fff" stroke="#000" stroke-width="1"/>
<rect x="818" y="118" width="27.5" height="1" fill="#000080"/>
<path d="M831.5,115 l2.7,3.5 l-2.7,3.5 l-2.7,-3.5 z" fill="#000080"/>
<rect x="818.3" y="137.8" width="27.5" height="2.4" fill="#000"/>
<text transform="translate(848,122.2) scale(0.907,1)" font-family='"Liberation Sans", sans-serif' font-size="14.6" fill="#000" text-anchor="start" >Ряд1</text>
<text transform="translate(848,142.2) scale(0.876,1)" font-family='"Liberation Sans", sans-serif' font-size="14.6" fill="#000" text-anchor="start" >Полиномиальный (Ряд1)</text>
<rect x="397" y="361" width="413" height="425" fill="#4A4A4A"/>
<rect x="398" y="387" width="411" height="398" fill="#F0F0F0"/>
<text transform="translate(401.5,378) scale(0.966,1)" font-family='"Liberation Sans", sans-serif' font-size="12" fill="#fff" text-anchor="start" >Линия тренда</text>
<path d="M790.2,369.7 l9.6,9.6 M799.8,369.7 l-9.6,9.6" stroke="#fff" stroke-width="1.3" fill="none"/>
<rect x="404.5" y="415.5" width="396" height="325" fill="#fff" stroke="#D9D9D9" stroke-width="1"/>
<rect x="459.5" y="396.5" width="71" height="19" fill="#F0F0F0" stroke="#D9D9D9" stroke-width="1"/>
<rect x="404.5" y="394.5" width="55" height="21" fill="#fff" stroke="#D9D9D9" stroke-width="1"/>
<rect x="405" y="415" width="54" height="2" fill="#fff"/>
<g font-family='"Liberation Sans", sans-serif' font-size="11" fill="#000" stroke="#000" stroke-width="0.22">
<text x="430" y="410" text-anchor="middle" textLength="18" lengthAdjust="spacingAndGlyphs">Тип</text>
<text x="465.5" y="411" textLength="57" lengthAdjust="spacingAndGlyphs">Параметры</text>
</g>
<rect x="411.5" y="444.5" width="377" height="149" fill="none" stroke="#DCDCDC" stroke-width="1"/>
<rect x="414" y="440" width="302" height="10" fill="#fff"/>
<text x="415.5" y="447.7" font-family='"Liberation Sans", sans-serif' font-size="11" fill="#000" stroke="#000" stroke-width="0.22" textLength="299" lengthAdjust="spacingAndGlyphs">Построение линии тренда (аппроксимация и сглаживание)</text>
<rect x="418.5" y="457.5" width="53" height="46" fill="#fff" stroke="#7B818C" stroke-width="1"/>
<rect x="418.5" y="525.5" width="53" height="46" fill="#fff" stroke="#7B818C" stroke-width="1"/>
<rect x="529.5" y="457.5" width="53" height="46" fill="#fff" stroke="#7B818C" stroke-width="1"/>
<rect x="529.5" y="525.5" width="53" height="46" fill="#fff" stroke="#7B818C" stroke-width="1"/>
<rect x="637.5" y="457.5" width="53" height="46" fill="#fff" stroke="#7C808A" stroke-width="1"/>
<rect x="639" y="459" width="50" height="43" fill="#000"/>
<rect x="637.5" y="525.5" width="53" height="46" fill="#fff" stroke="#7B818C" stroke-width="1"/>
<rect x="425" y="498" width="2" height="2" fill="#000"/>
<rect x="432" y="494" width="2" height="2" fill="#000"/>
<rect x="428" y="488" width="2" height="2" fill="#000"/>
<rect x="436" y="486" width="2" height="2" fill="#000"/>
<rect x="443" y="486" width="2" height="2" fill="#000"/>
<rect x="440" y="480" width="2" height="2" fill="#000"/>
<rect x="447" y="473" width="2" height="2" fill="#000"/>
<rect x="451" y="479" width="2" height="2" fill="#000"/>
<rect x="455" y="477" width="2" height="2" fill="#000"/>
<rect x="458" y="470" width="2" height="2" fill="#000"/>
<rect x="462" y="474" width="2" height="2" fill="#000"/>
<path d="M425.8,499 L462.9,470.4" stroke="#000" stroke-width="1.2" fill="none"/>
<rect x="644" y="499" width="2" height="2" fill="#fff"/>
<rect x="647" y="481" width="2" height="2" fill="#fff"/>
<rect x="651" y="488" width="2" height="2" fill="#fff"/>
<rect x="655" y="485" width="2" height="2" fill="#fff"/>
<rect x="659" y="485" width="2" height="2" fill="#fff"/>
<rect x="662" y="497" width="2" height="2" fill="#fff"/>
<rect x="666" y="488" width="2" height="2" fill="#fff"/>
<rect x="670" y="494" width="2" height="2" fill="#fff"/>
<rect x="674" y="490" width="2" height="2" fill="#fff"/>
<rect x="677" y="477" width="2" height="2" fill="#fff"/>
<rect x="681" y="474" width="2" height="2" fill="#fff"/>
<polyline points="644.8,499.8 646.6,494.8 647.3,490.8 648.7,488 650.5,486.9 653.4,486.6 655.5,487.3 663.4,495.3 666.9,496.5 669.1,495.5 674.8,489.8 676.5,485.5 678,479.1 680.5,474.1 682.6,470.2" stroke="#fff" stroke-width="1.1" fill="none" stroke-linejoin="round"/>
<rect x="644" y="557" width="2" height="2" fill="#000"/>
<rect x="647" y="555" width="2" height="2" fill="#000"/>
<rect x="651" y="563" width="2" height="2" fill="#000"/>
<rect x="655" y="562" width="2" height="2" fill="#000"/>
<rect x="659" y="564" width="2" height="2" fill="#000"/>
<rect x="662" y="546" width="2" height="2" fill="#000"/>
<rect x="666" y="546" width="2" height="2" fill="#000"/>
<rect x="670" y="537" width="2" height="2" fill="#000"/>
<rect x="674" y="540" width="2" height="2" fill="#000"/>
<rect x="677" y="547" width="2" height="2" fill="#000"/>
<rect x="681" y="536" width="2" height="2" fill="#000"/>
<polyline points="652.3,559.3 656.2,561 660.2,563 662.3,559.6 671.9,543.5 674.8,542.5 681.9,542.5" stroke="#000" stroke-width="1.2" fill="none"/>
<defs><filter id="bl" x="-20%" y="-60%" width="140%" height="220%"><feGaussianBlur stdDeviation="2.7"/></filter><filter id="bl2" x="-20%" y="-60%" width="140%" height="220%"><feGaussianBlur stdDeviation="1.8"/></filter></defs>
<rect x="629.5" y="505.6" width="103.5" height="15" rx="7.5" fill="#E3F200" filter="url(#bl)"/>
<rect x="632" y="507.6" width="98" height="11" rx="5.5" fill="#DDF000" filter="url(#bl2)"/>
<g font-family='"Liberation Sans", sans-serif' font-size="11" fill="#000" stroke="#000" stroke-width="0.22">
<text x="418" y="515.6" textLength="48.5" lengthAdjust="spacingAndGlyphs">Линейная</text>
<rect x="418" y="517" width="7" height="1" fill="#000"/>
<text x="529" y="515.6" fill="#6D6D6D" stroke="#6D6D6D" textLength="91" lengthAdjust="spacingAndGlyphs">Логарифмическая</text>
<text x="637" y="515.6" textLength="84.3" lengthAdjust="spacingAndGlyphs">Полиномиальная</text>
<rect x="637" y="517" width="7" height="1" fill="#000"/>
<text x="418" y="584" fill="#6D6D6D" stroke="#6D6D6D" textLength="54" lengthAdjust="spacingAndGlyphs">Степенная</text>
<text x="529" y="584" fill="#6D6D6D" stroke="#6D6D6D" textLength="95.5" lengthAdjust="spacingAndGlyphs">Экспоненциальная</text>
<text x="637" y="584" textLength="113" lengthAdjust="spacingAndGlyphs">Линейная фильтрация</text>
<rect x="689" y="586" width="8" height="1" fill="#000"/>
<text x="696.4" y="477.5" textLength="46.5" lengthAdjust="spacingAndGlyphs">Степень:</text>
<rect x="728.3" y="478.6" width="5.7" height="1" fill="#000"/>
<text x="695.8" y="548" fill="#6D6D6D" stroke="#6D6D6D" textLength="33.6" lengthAdjust="spacingAndGlyphs">Точки:</text>
<text x="409.5" y="610" textLength="94.5" lengthAdjust="spacingAndGlyphs">Построен на ряде:</text>
<rect x="482.5" y="611.4" width="5.6" height="1" fill="#000"/>
</g>
<rect x="697.5" y="481.5" width="58" height="19" fill="#fff" stroke="#ABADB3" stroke-width="1"/>
<rect x="701" y="484" width="37" height="13" fill="#000"/>
<text transform="translate(701.2,495) scale(1,1)" font-family='"Liberation Sans", sans-serif' font-size="11" fill="#fff" text-anchor="start" >5</text>
<rect x="739.5" y="483.5" width="14" height="7.5" fill="#F0F0F0" stroke="#C8C8C8" stroke-width="1"/>
<rect x="739.5" y="492" width="14" height="7" fill="#F0F0F0" stroke="#C8C8C8" stroke-width="1"/>
<path d="M743.9,488 l2.6,-3 l2.6,3 z M743.9,493.3 l2.6,3 l2.6,-3 z" fill="#222"/>
<rect x="697.5" y="551.5" width="58" height="19" fill="#F0F0F0" stroke="#ADADAD" stroke-width="1"/>
<rect x="698" y="552" width="40.3" height="17.7" fill="#A9CCEE"/>
<rect x="700.7" y="554.1" width="37.6" height="12.8" fill="#F0F0F0"/>
<text transform="translate(701.2,565) scale(1,1)" font-family='"Liberation Sans", sans-serif' font-size="11" fill="#838383" text-anchor="start" >2</text>
<rect x="739.5" y="553.5" width="14" height="7.5" fill="#F0F0F0" stroke="#DCDCDC" stroke-width="1"/>
<rect x="739.5" y="562" width="14" height="7" fill="#F0F0F0" stroke="#DCDCDC" stroke-width="1"/>
<path d="M743.9,558 l2.6,-3 l2.6,3 z M743.9,563.3 l2.6,3 l2.6,-3 z" fill="#707070"/>
<rect x="410.5" y="615.5" width="149" height="55" fill="#fff" stroke="#7A7A7A" stroke-width="1"/>
<rect x="412" y="617" width="129" height="13" fill="#0078D7"/>
<rect x="542" y="617" width="16" height="52" fill="#F0F0F0"/>
<path d="M546.2,628 l3.5,-3.5 l3.5,3.5 M546.2,659.3 l3.5,3.5 l3.5,-3.5" stroke="#BABABA" stroke-width="1.7" fill="none"/>
<text x="413" y="628" font-family='"Liberation Sans", sans-serif' font-size="11" fill="#fff" stroke="#fff" stroke-width="0.22" textLength="26" lengthAdjust="spacingAndGlyphs">Ряд1</text>
<rect x="647" y="757" width="70" height="18" fill="#E1E1E1" stroke="#0078D7" stroke-width="2"/>
<rect x="730.5" y="756.5" width="71" height="19" fill="#E1E1E1" stroke="#ADADAD" stroke-width="1"/>
<g font-family='"Liberation Sans", sans-serif' font-size="11" fill="#000" stroke="#000" stroke-width="0.22" text-anchor="middle">
<text x="681" y="770">OK</text>
<text x="764" y="770" textLength="38" lengthAdjust="spacingAndGlyphs">Отмена</text>
</g></svg>
</body></html>
